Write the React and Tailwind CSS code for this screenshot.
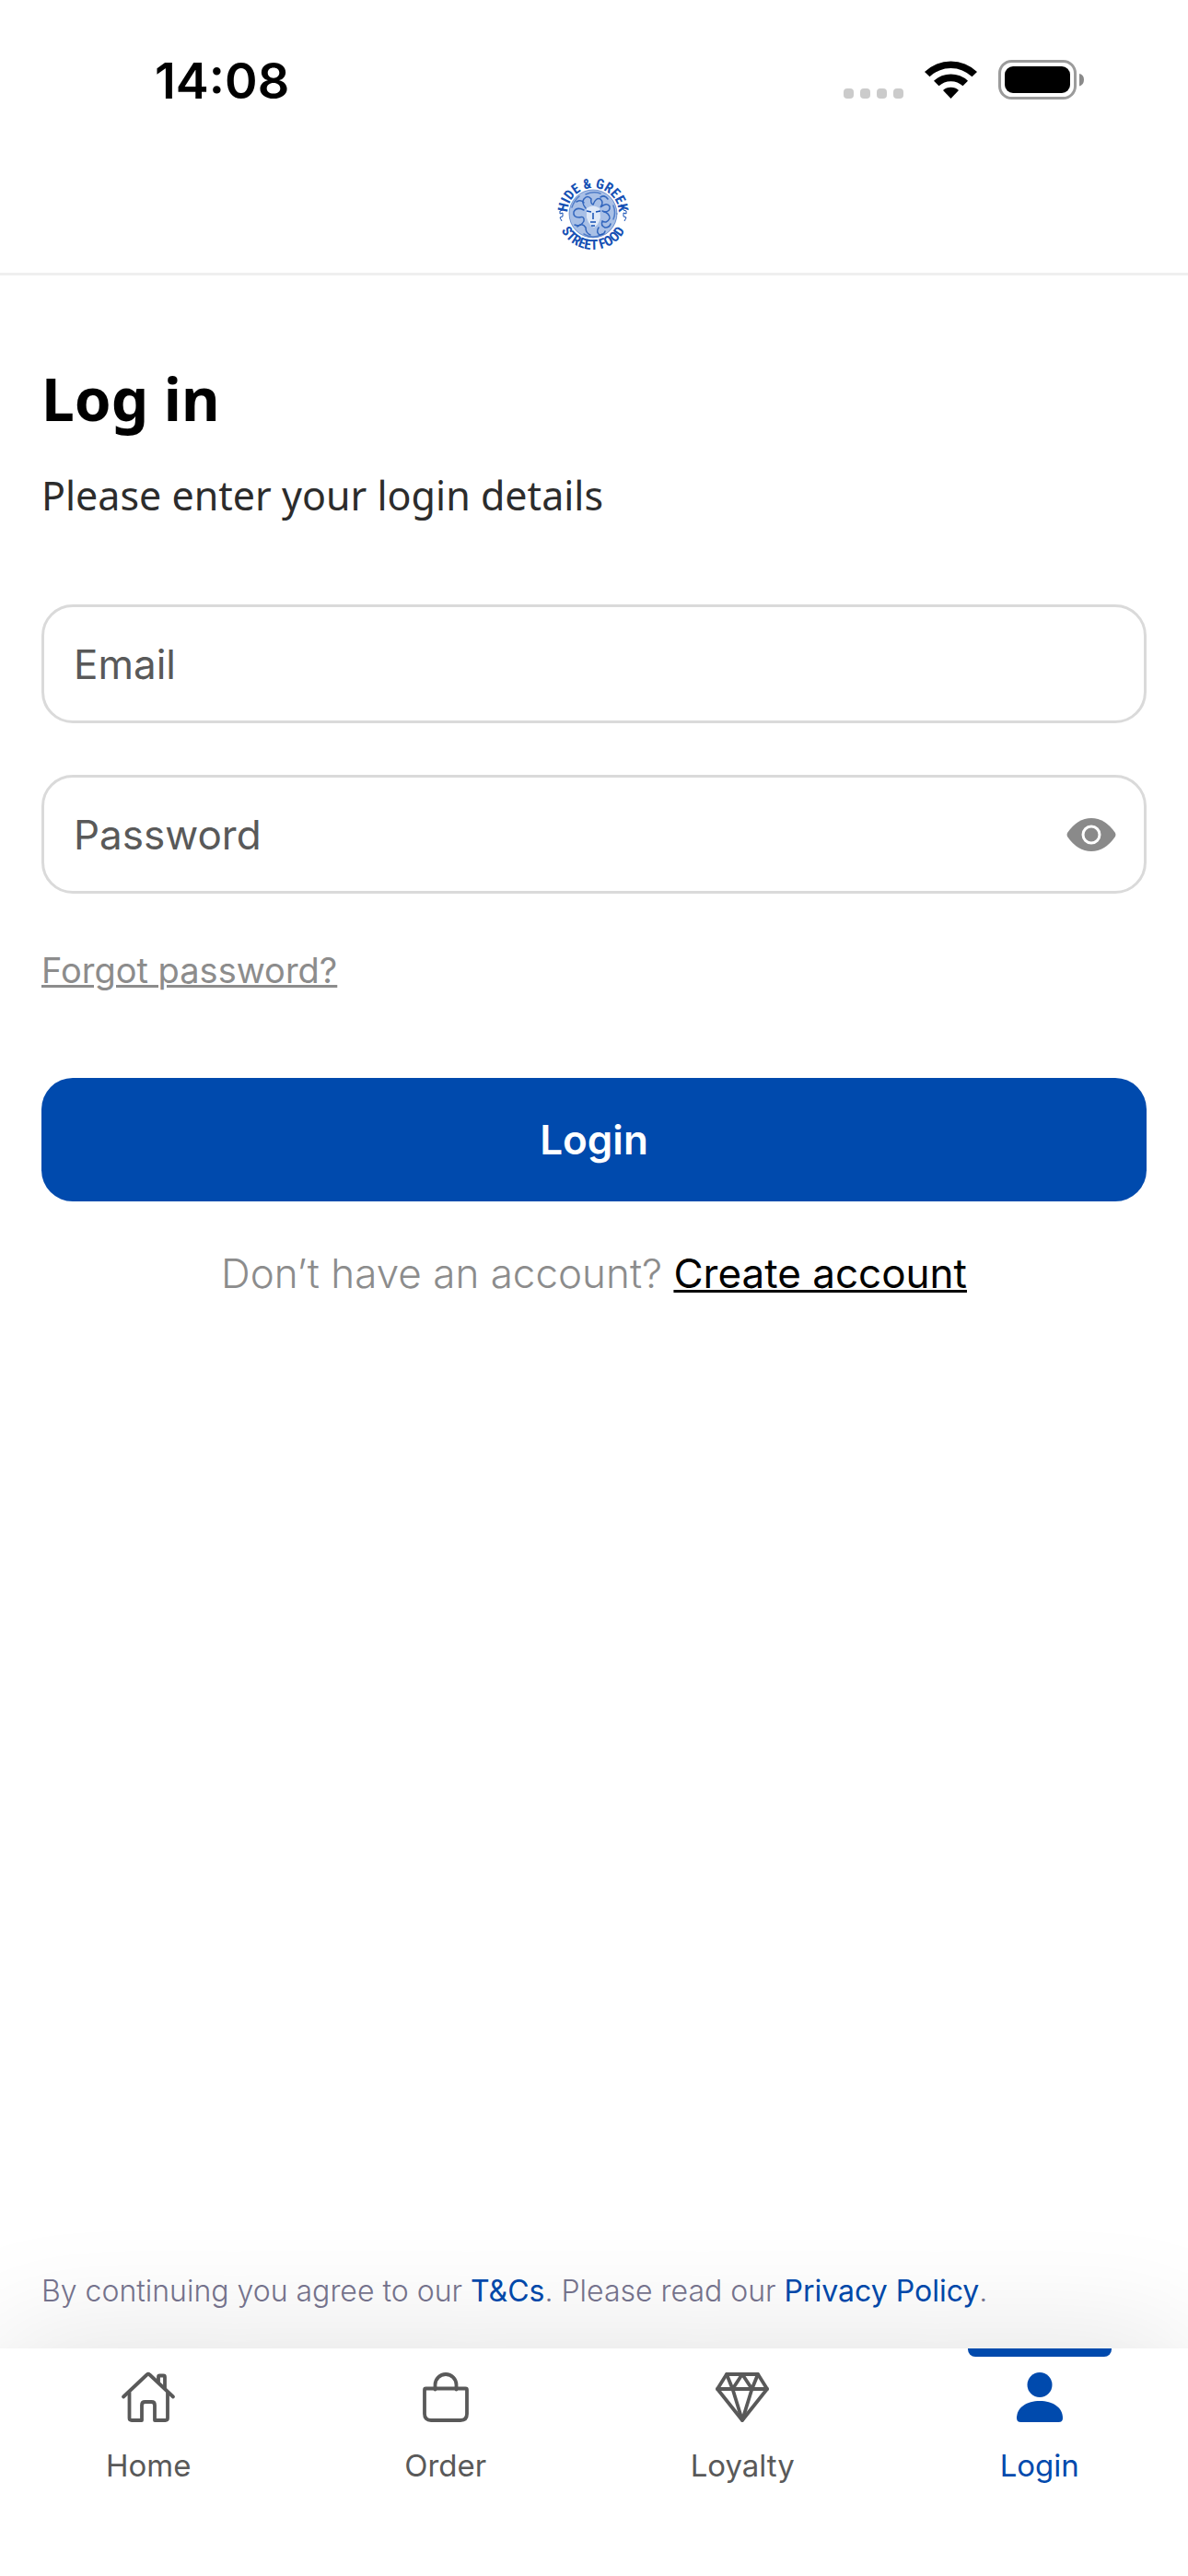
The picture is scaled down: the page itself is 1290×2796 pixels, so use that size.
import React, { useState } from 'react';

const HomeIcon = () => (
  <svg viewBox="0 0 60 60" className="size-15" fill="none" stroke="currentColor" strokeWidth="3.800" strokeLinecap="round" strokeLinejoin="round">
    <path d="M3 29.500 28.500 5.500Q30 4 31.500 5.500L57 29.500" />
    <path d="M41 13V8Q41 6.500 42.500 6.500H46.500Q48 6.500 48 8V20" />
    <path d="M9.500 25V52.500Q9.500 55 12 55H23V38.500Q23 35 26.500 35H33.500Q37 35 37 38.500V55H48.500Q51 55 51 52.500V25" />
  </svg>
);

const BagIcon = () => (
  <svg viewBox="0 0 60 60" className="size-15" fill="none" stroke="currentColor" strokeWidth="3.800" strokeLinecap="round" strokeLinejoin="round">
    <path d="M8.500 20.500H51.500Q53 20.500 53 22V48Q53 55 46 55H14Q7 55 7 48V22Q7 20.500 8.500 20.500Z" />
    <path d="M18.500 21.500V16.500A11.500 11.500 0 0 1 41.500 16.500V21.500" />
  </svg>
);

const DiamondIcon = () => (
  <svg viewBox="0 0 60 60" className="size-15" fill="none" stroke="currentColor" strokeWidth="3.800" strokeLinecap="round" strokeLinejoin="round">
    <path d="M13 5H47L57 21 30 55 3 21Z" />
    <path d="M3 21H57M13 5 19.500 21 30 5 40.500 21 47 5M19.500 21 30 55 40.500 21" />
  </svg>
);

const UserIcon = () => (
  <svg viewBox="0 0 60 60" className="size-15" fill="currentColor">
    <circle cx="30" cy="16.500" r="13.500" />
    <path d="M5 52.500C5 41 16 34 30 34S55 41 55 52.500Q55 57 50.500 57H9.500Q5 57 5 52.500Z" />
  </svg>
);

const Logo = () => (
  <svg viewBox="0 0 110 100" className="w-[110px] h-[100px] text-[#1550b4]" role="img" aria-label="Hide & Greek Street Food">
    <defs>
      <path id="logo-top" d="M26 52A28 28 0 0 1 82 52" />
      <path id="logo-bottom" d="M15 52A39 39 0 0 0 93 52" />
    </defs>
    <circle cx="54" cy="52" r="26" fill="#a9c0e6" />
    <g fill="none" stroke="currentColor" strokeWidth="1.500" strokeLinecap="round">
      <circle cx="54" cy="52" r="26" strokeWidth="1" opacity="0.500" />
      <g opacity="0.800">
        <path d="M46 46q-5-6-2-10q4-5 8 0q-1 5 2 6q3-8 8-6q4 4 0 9q7-6 10-1q1 6-6 6" />
        <path d="M44 48q-8-4-11 2q-1 6 6 6q6-2 5 4q-4 7-10 4" />
        <path d="M64 49q8 2 8 8q-3 6-8 3q-2 5 3 7q5 0 6-4" />
        <path d="M36 39q5-3 8 1M62 34q5-3 8 2M37 66q5-5 9 1q0 6 5 8M60 67q-3 5 1 8q5 0 6-4" />
      </g>
      <path d="M31 45q3-8 8-12M76 43q3 8 0 15M46 31q8-4 16-1M44 74q10 6 20 0" opacity="0.600" />
    </g>
    <path d="M47 46q7-5 14 0l1 10q-2 8-7 11q-6-3-8-11Z" fill="#dfe9f8" />
    <g fill="none" stroke="currentColor" strokeWidth="1.500">
      <path d="M47 49l5 1M57 50l5-1M54 51v7M51 61h6M52 65h4" />
      <path d="M24 42l-3 2 0 4-3 1 0 3 3-1 0 4-3 1 2 4M84 42l3 2 0 4 3 1 0 3-3-1 0 4 3 1-2 4" strokeWidth="1" />
    </g>
    <g fill="currentColor" className="font-['Liberation_Sans_Narrow','Roboto_Condensed','Roboto',sans-serif] font-bold text-[15px]" textAnchor="middle">
      <text><textPath href="#logo-top" startOffset="50%">HIDE &amp; GREEK</textPath></text>
      <text><textPath href="#logo-bottom" startOffset="50%">STREET FOOD</textPath></text>
    </g>
  </svg>
);

const StatusBar = () => (
  <div className="flex h-[174px] items-start justify-between pl-[168px] pr-[112px] pt-[54px] text-black">
    <span className="text-[54px] leading-[68px] font-semibold">14:08</span>
    <div className="flex items-start pt-[10px]">
      <svg viewBox="0 0 262 45" className="w-[262px] h-[45px]" aria-hidden="true">
        <g fill="#cbcbcb">
          <rect x="0" y="32" width="11" height="11" rx="4" />
          <rect x="18" y="32" width="11" height="11" rx="4" />
          <rect x="36" y="32" width="11" height="11" rx="4" />
          <rect x="54" y="32" width="11" height="11" rx="4" />
        </g>
        <path d="M88 14A41 41 0 0 1 145 14L139.500 19.300A33 33 0 0 0 93.500 19.300Z" />
        <path d="M98 23.800A27 27 0 0 1 135 23.800L129.500 29.300A19 19 0 0 0 103.500 29.300Z" />
        <path d="M108 34A13 13 0 0 1 125 34L116.500 43Z" />
        <rect x="169.500" y="2.500" width="82" height="40" rx="13" fill="none" stroke="#9b9b9b" strokeWidth="3" />
        <rect x="175" y="8" width="71" height="29" rx="9" />
        <path d="M256 16Q261 17 261 22.500T256 29.500Z" fill="#8a8a8a" />
      </svg>
    </div>
  </div>
);

const navItems = [
  { label: 'Home', icon: HomeIcon },
  { label: 'Order', icon: BagIcon },
  { label: 'Loyalty', icon: DiamondIcon },
  { label: 'Login', icon: UserIcon, active: true }
];

const inputClass =
  'block h-[129px] w-full rounded-[34px] border-3 border-[#dadada] bg-white px-8 text-[44px] text-[#595959] placeholder:text-[#595959] placeholder:opacity-100 outline-none';

const App = () => {
  const [showPassword, setShowPassword] = useState(false);

  return (
    <div className="flex min-h-screen flex-col bg-white font-['Inter',sans-serif]">
      <StatusBar />

      <header className="flex h-[125px] items-start justify-center border-b-3 border-[#efefef] pt-[6px]">
        <Logo />
      </header>

      <main className="flex flex-1 flex-col px-[45px] pt-[90px]">
        <h1 className="font-['Noto_Sans',sans-serif] text-[64px] leading-[88px] font-bold text-black">Log in</h1>
        <p className="mt-[29px] font-['Noto_Sans',sans-serif] text-[43px] leading-[64px] text-[#2c2c2c]">
          Please enter your login details
        </p>

        <form className="mt-[86px] flex flex-col" onSubmit={(e) => e.preventDefault()}>
          <input type="email" aria-label="Email" placeholder="Email" className={inputClass} />

          <div className="relative mt-14">
            <input
              type={showPassword ? 'text' : 'password'}
              aria-label="Password"
              placeholder="Password"
              className={inputClass}
            />
            <button
              type="button"
              aria-label="Show password"
              onClick={() => setShowPassword(!showPassword)}
              className="absolute inset-y-0 right-[33px] flex items-center"
            >
              <svg viewBox="0 0 54 36" className="h-9 w-[54px]">
                <path d="M1 16Q12 0 27 0T53 16Q54 18 53 20Q42 36 27 36T1 20Q0 18 1 16Z" fill="#8a8a8a" />
                <circle cx="27" cy="18" r="9" fill="none" stroke="#ffffff" strokeWidth="3" />
              </svg>
            </button>
          </div>

          <a href="#forgot" className="mt-14 self-start text-[38px] leading-[54px] text-[#8c8c8c] underline decoration-3">
            Forgot password?
          </a>

          <button type="submit" className="mt-[90px] h-[134px] rounded-[34px] bg-[#004aad] text-[44px] font-semibold text-white">
            Login
          </button>
        </form>

        <p className="mt-12 text-center text-[44px] leading-[60px] font-light text-[#8c8c8c]">
          Don’t have an account?{' '}
          <a href="#create" className="font-normal text-black underline decoration-3">Create account</a>
        </p>
      </main>

      {/* Terms, sitting over the shadow that the tab bar casts */}
      <p className="px-[45px] pb-[38px] text-[32px] leading-[48px] font-light text-[#77758f]">
        By continuing you agree to our <a href="#terms" className="font-normal text-[#004aad]">T&amp;Cs</a>. Please read our{' '}
        <a href="#privacy" className="font-normal text-[#004aad]">Privacy Policy</a>.
      </p>

      <nav className="grid h-[247px] grid-cols-4 bg-white shadow-[0_0_140px_rgba(0,0,0,0.13)]">
        {navItems.map(({ label, icon: Icon, active }) => (
          <a
            key={label}
            href={`#${label.toLowerCase()}`}
            className={`relative flex flex-col items-center pt-[23px] text-[33px] leading-[48px] ${active ? 'text-[#004aad]' : 'text-[#595959]'}`}
          >
            {active && <span className="absolute top-0 h-[9px] w-[156px] rounded-b-lg bg-[#004aad]" />}
            <Icon />
            <span className="mt-5">{label}</span>
          </a>
        ))}
      </nav>
    </div>
  );
};

export default App;
